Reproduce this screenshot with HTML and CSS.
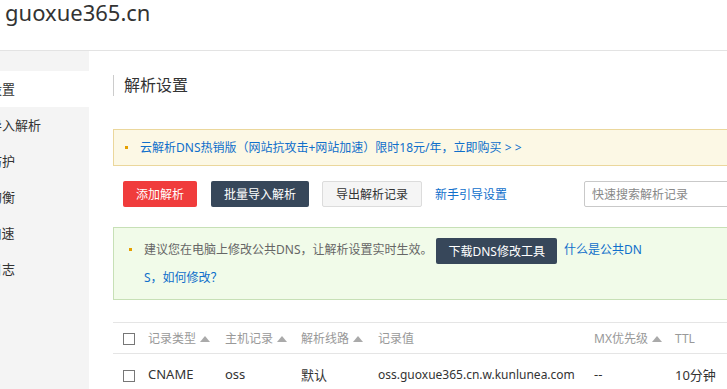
FILE: index.html
```html
<!DOCTYPE html>
<html>
<head>
    <title>guoxue365.cn - 解析设置</title>
    <link rel="stylesheet" href="styles.css">
</head>
<body>
    <div class="top">
        <span class="domain">guoxue365.cn</span>
    </div>

    <div class="layout">
        <ul class="side">
            <li class="active">解析设置</li>
            <li>批量导入解析</li>
            <li>攻击防护</li>
            <li>负载均衡</li>
            <li class="narrow">CDN加速</li>
            <li>操作日志</li>
        </ul>

        <div class="main">
            <h2 class="title">解析设置</h2>

            <ul class="notice notice-yellow">
                <li><a href="#">云解析DNS热销版（网站抗攻击+网站加速）限时18元/年，立即购买 &gt; &gt;</a></li>
            </ul>

            <div class="toolbar">
                <button class="btn btn-red">添加解析</button>
                <button class="btn btn-dark">批量导入解析</button>
                <button class="btn btn-light">导出解析记录</button>
                <a href="#" class="guide">新手引导设置</a>
                <input class="search" type="text" placeholder="快速搜索解析记录">
            </div>

            <ul class="notice notice-green">
                <li>建议您在电脑上修改公共DNS，让解析设置实时生效。<button class="btn btn-dark btn-inline">下载DNS修改工具</button><a href="#">什么是公共DNS，如何修改？</a></li>
            </ul>

            <table class="records">
                <colgroup>
                    <col style="width:35px">
                    <col style="width:77px">
                    <col style="width:76px">
                    <col style="width:77px">
                    <col style="width:216px">
                    <col style="width:81px">
                    <col style="width:60px">
                </colgroup>
                <thead>
                    <tr>
                        <th><span class="check"></span></th>
                        <th>记录类型 <span class="sort"></span></th>
                        <th>主机记录 <span class="sort"></span></th>
                        <th>解析线路 <span class="sort"></span></th>
                        <th>记录值</th>
                        <th>MX优先级 <span class="sort"></span></th>
                        <th>TTL</th>
                    </tr>
                </thead>
                <tbody>
                    <tr>
                        <td><span class="check"></span></td>
                        <td>CNAME</td>
                        <td>oss</td>
                        <td>默认</td>
                        <td class="value">oss.guoxue365.cn.w.kunlunea.com</td>
                        <td>--</td>
                        <td>10分钟</td>
                    </tr>
                </tbody>
            </table>
        </div>
    </div>
</body>
</html>
```

FILE: styles.css
```css
html, body { margin: 0; padding: 0; overflow: hidden; }
body { font-family: "Noto Sans", "Noto Sans CJK SC", sans-serif; color: #333; background: #fff; }
ul { list-style: none; margin: 0; padding: 0; }
a { color: #0f6fcb; text-decoration: none; }

.top { height: 51px; box-sizing: border-box; border-bottom: 1px solid #e3e3e3; padding-left: 5px; }
.domain { font-size: 22px; line-height: 24px; color: #333; }

.layout { display: flex; height: 338px; }
.side { width: 89px; flex: none; background: #f4f4f4; padding-top: 20px; overflow: hidden; }
.side li { height: 36px; line-height: 36px; font-size: 13px; text-indent: -37px; white-space: nowrap; color: #333; }
.side li.narrow { text-indent: -39px; }
.side li.active { background: #fff; }

.main { width: 760px; flex: none; padding: 24px 0 0 24px; }
.title { margin: 0; font-size: 16px; font-weight: normal; line-height: 21px; border-left: 1px solid #ccc; padding-left: 10px; color: #333; }

.notice { margin-top: 33px; border: 1px solid; font-size: 12px; }
.notice li::before { content: ""; display: inline-block; width: 3px; height: 3px; background: #e5a000; vertical-align: middle; margin: -2px 12px 0 -15px; }
.notice-yellow { background: #fcf8e5; border-color: #ebd79c; padding: 0 11px 0 26px; line-height: 35px; }
.notice-green { margin-top: 20px; background: #f1fbe9; border-color: #c7e0b6; padding: 8px 15px 7px 30px; line-height: 28px; color: #666; }
.notice-green li { width: 504px; word-break: break-all; }

.toolbar { display: flex; align-items: center; margin-top: 15px; padding-left: 10px; }
.btn { height: 26px; padding: 0 13px; font-family: inherit; font-size: 12px; border: none; border-radius: 2px; cursor: pointer; color: #fff; }
.btn-red { background: #f03c3c; }
.btn-dark { background: #37475a; margin-left: 14px; }
.btn-light { background: #f5f5f5; color: #333; border: 1px solid #dcdcdc; margin-left: 13px; }
.guide { font-size: 12px; margin-left: 13px; }
.search { width: 200px; height: 26px; box-sizing: border-box; margin-left: 77px; border: 1px solid #c9c9c9; border-radius: 2px; padding: 0 7px; font-family: inherit; font-size: 12px; }
.search::placeholder { color: #888; }

.btn-inline { margin: 0 7px 0 4px; padding: 0 12px; vertical-align: middle; }

.records { margin-top: 22px; border-collapse: collapse; table-layout: fixed; width: 622px; }
.records th, .records td { text-align: left; padding: 0; white-space: nowrap; }
.records th:first-child, .records td:first-child { padding-left: 10px; }
.records th { height: 30px; font-size: 12px; font-weight: normal; color: #999; border-top: 1px solid #e5e5e5; border-bottom: 1px solid #e5e5e5; }
.records td { height: 40px; font-size: 13px; color: #333; }
.records td.value { font-size: 12px; }
.check { display: inline-block; width: 10px; height: 10px; border: 1px solid #777; vertical-align: middle; }
.sort { display: inline-block; width: 0; height: 0; border-left: 5px solid transparent; border-right: 5px solid transparent; border-bottom: 6px solid #aaa; vertical-align: 1px; margin-left: 1px; }
```
